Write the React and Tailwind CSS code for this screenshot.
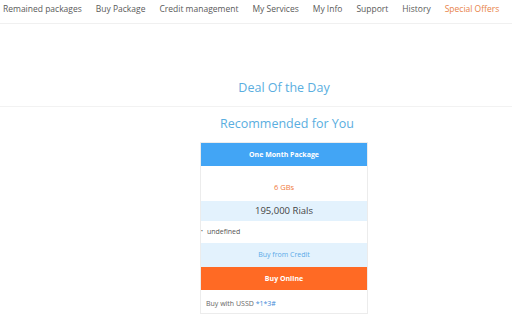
const NAV = [
  "Remained packages",
  "Buy Package",
  "Credit management",
  "My Services",
  "My Info",
  "Support",
  "History",
];

export default function App() {
  return (
    <div className="w-[512px] h-[336px] bg-white overflow-hidden text-[#555]" style={{ fontFamily: '"Open Sans", sans-serif' }}>
      <nav className="flex h-[24px] items-start border-b border-[#f0f0f0] pl-[3px] pt-[1px] gap-[14px] text-[8.5px] leading-[15px]">
        {NAV.map((n) => (
          <span key={n} className="whitespace-nowrap text-[#5a5a5a]">{n}</span>
        ))}
        <span className="whitespace-nowrap text-[#e8834a]">Special Offers</span>
      </nav>

      <div className="pt-[54px] pl-[56px] text-center text-[12.5px] leading-[20px] text-[#5aaee0]">Deal Of the Day</div>
      <div className="mt-[8px] border-t border-[#f2f2f2]" />
      <div className="pt-[7px] pl-[62px] text-center text-[12.5px] leading-[20px] text-[#5aaee0]">Recommended for You</div>

      <div className="ml-[200px] mt-[8px] w-[168px] border border-[#ececec] text-center">
        <div className="h-[23px] bg-[#42a5f5] text-[7px] font-bold leading-[23px] text-white">One Month Package</div>
        <div className="h-[35px] pt-[15px] text-[7.5px] leading-[12px] text-[#f07a3e]">6 GBs</div>
        <div className="h-[20px] bg-[#e3f2fd] text-[9.5px] leading-[20px] text-[#444]">195,000 Rials</div>
        <div className="flex h-[22px] items-center text-left text-[7px] text-[#555]">
          <span className="mr-[4px] text-[5px]">•</span>
          <span>undefined</span>
        </div>
        <div className="h-[24px] bg-[#e3f2fd] text-[7px] leading-[24px] text-[#5aaae8]">Buy from Credit</div>
        <div className="h-[23px] bg-[#ff6a24] text-[7px] font-bold leading-[23px] text-white">Buy Online</div>
        <div className="h-[23px] pl-[5px] pt-[2px] text-left text-[7px] leading-[23px] text-[#666]">
          Buy with USSD <span className="text-[#3f8ad8]">*1*3#</span>
        </div>
      </div>
    </div>
  );
}
